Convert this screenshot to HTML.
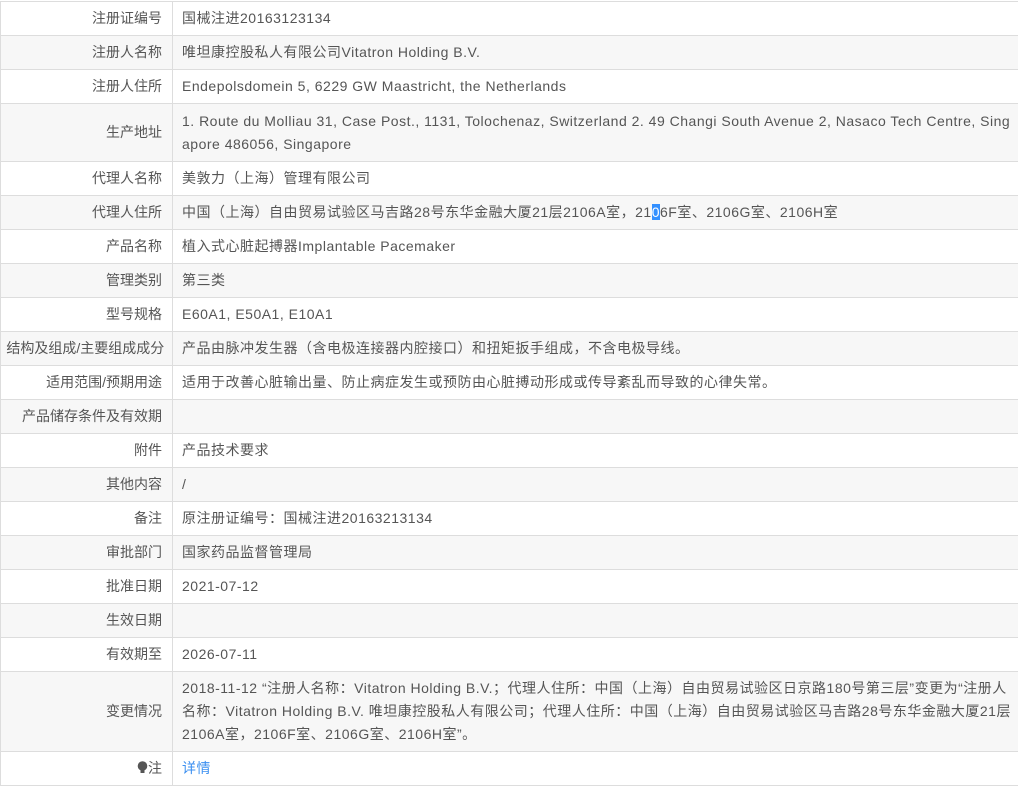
<!DOCTYPE html>
<html><head><meta charset="utf-8"><style>
html,body{margin:0;padding:0;background:#fff;}
body{width:1018px;height:781px;overflow:hidden;font-family:"Liberation Sans","Noto Sans CJK SC",sans-serif;font-size:14px;color:#555;}
table{border-collapse:collapse;width:1019px;margin-top:1px;table-layout:fixed;}
td{border:1px solid #ddd;padding:0 10px;line-height:23px;}
td+td{letter-spacing:0.5px;padding-left:9px;padding-right:6px;}
td.l{width:151px;text-align:right;padding-right:10px;}
tr:nth-child(even){background:#f7f7f7;}
tr{height:34px;}
.sel{background:#3390ff;color:#fff;}
a{color:#3b8ff0;text-decoration:none;}
</style></head><body>
<table>
<tr><td class="l">注册证编号</td><td>国械注进20163123134</td></tr>
<tr><td class="l">注册人名称</td><td>唯坦康控股私人有限公司Vitatron Holding B.V.</td></tr>
<tr><td class="l">注册人住所</td><td>Endepolsdomein 5, 6229 GW Maastricht, the Netherlands</td></tr>
<tr style="height:58px"><td class="l">生产地址</td><td style="word-break:break-all">1. Route du Molliau 31, Case Post., 1131, Tolochenaz, Switzerland 2. 49 Changi South Avenue 2, Nasaco Tech Centre, Singapore 486056, Singapore</td></tr>
<tr><td class="l">代理人名称</td><td>美敦力（上海）管理有限公司</td></tr>
<tr><td class="l">代理人住所</td><td>中国（上海）自由贸易试验区马吉路28号东华金融大厦21层2106A室，21<span class="sel">0</span>6F室、2106G室、2106H室</td></tr>
<tr><td class="l">产品名称</td><td>植入式心脏起搏器Implantable Pacemaker</td></tr>
<tr><td class="l">管理类别</td><td>第三类</td></tr>
<tr><td class="l">型号规格</td><td>E60A1, E50A1, E10A1</td></tr>
<tr><td class="l" style="padding:0;white-space:nowrap">结构及组成/主要组成成分&nbsp;&nbsp;</td><td>产品由脉冲发生器（含电极连接器内腔接口）和扭矩扳手组成，不含电极导线。</td></tr>
<tr><td class="l">适用范围/预期用途</td><td>适用于改善心脏输出量、防止病症发生或预防由心脏搏动形成或传导紊乱而导致的心律失常。</td></tr>
<tr><td class="l">产品储存条件及有效期</td><td></td></tr>
<tr><td class="l">附件</td><td>产品技术要求</td></tr>
<tr><td class="l">其他内容</td><td>/</td></tr>
<tr><td class="l">备注</td><td>原注册证编号：国械注进20163213134</td></tr>
<tr><td class="l">审批部门</td><td>国家药品监督管理局</td></tr>
<tr><td class="l">批准日期</td><td>2021-07-12</td></tr>
<tr><td class="l">生效日期</td><td></td></tr>
<tr><td class="l">有效期至</td><td>2026-07-11</td></tr>
<tr style="height:80px"><td class="l">变更情况</td><td>2018-11-12 “注册人名称：Vitatron Holding B.V.；代理人住所：中国（上海）自由贸易试验区日京路180号第三层”变更为“注册人名称：Vitatron Holding B.V. 唯坦康控股私人有限公司；代理人住所：中国（上海）自由贸易试验区马吉路28号东华金融大厦21层2106A室，2106F室、2106G室、2106H室”。</td></tr>
<tr style="background:#fff"><td class="l"><svg width="11" height="13" viewBox="0 0 11 13" style="vertical-align:-1px"><circle cx="5.5" cy="5" r="4.8" fill="#555"/><rect x="3.5" y="9" width="4" height="3" fill="#555"/></svg>注</td><td><a>详情</a></td></tr>
</table>
</body></html>
